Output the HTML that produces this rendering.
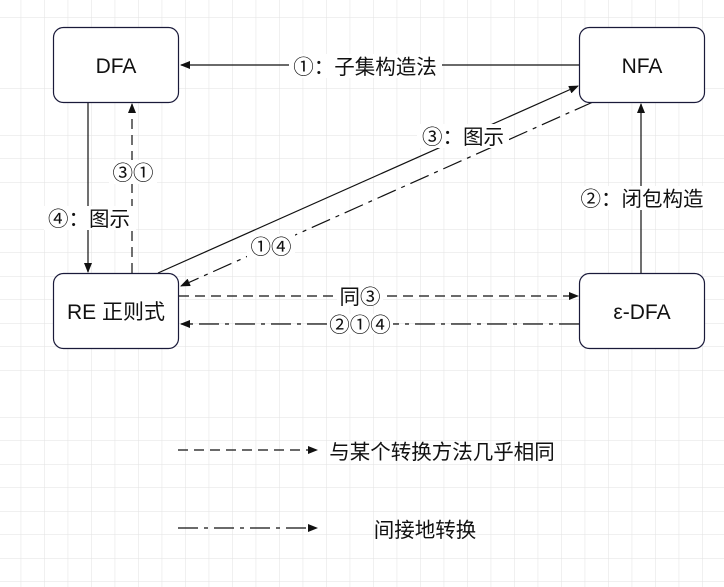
<!DOCTYPE html>
<html><head><meta charset="utf-8"><style>
html,body{margin:0;padding:0;background:#fff}
svg{display:block}
text{font-family:"Liberation Sans","Noto Sans CJK SC",sans-serif;fill:#111}
.c{font-family:"WenQuanYi Zen Hei","Noto Sans CJK SC",sans-serif}
</style></head><body>
<svg width="724" height="587" viewBox="0 0 724 587" xmlns="http://www.w3.org/2000/svg">
<defs>
<pattern id="g" x="20.7" y="17.5" width="23.5" height="23.5" patternUnits="userSpaceOnUse">
<path d="M0 0H23.5M0 0V23.5" stroke="#e2e2e2" stroke-width="1" fill="none"/>
</pattern>
<marker id="a" markerWidth="10" markerHeight="8" refX="9" refY="4" orient="auto" markerUnits="userSpaceOnUse">
<path d="M0 0L10 4L0 8Z" fill="#111"/>
</marker>
</defs>
<rect width="724" height="587" fill="#fff"/>
<rect width="724" height="587" fill="url(#g)"/>
<g stroke="#111" stroke-width="1.2" fill="none">
<line x1="579" y1="65" x2="181" y2="65" marker-end="url(#a)"/>
<line x1="88" y1="102" x2="88" y2="272" marker-end="url(#a)"/>
<line x1="132" y1="273" x2="132" y2="104" stroke-dasharray="10 6" marker-end="url(#a)"/>
<line x1="158" y1="273" x2="578" y2="86" marker-end="url(#a)"/>
<line x1="593" y1="102" x2="181" y2="286" stroke-dasharray="20 6 4 6" marker-end="url(#a)"/>
<line x1="641" y1="273" x2="641" y2="104" marker-end="url(#a)"/>
<line x1="179" y1="296" x2="578" y2="296" stroke-dasharray="10 6" marker-end="url(#a)"/>
<line x1="579" y1="324" x2="181" y2="324" stroke-dasharray="20 6 4 6" marker-end="url(#a)"/>
<line x1="178" y1="450" x2="317" y2="450" stroke-dasharray="10 6" marker-end="url(#a)"/>
<line x1="178" y1="528" x2="317" y2="528" stroke-dasharray="20 6 4 6" marker-end="url(#a)"/>
</g>
<g fill="#fff" stroke="#1a1a3a" stroke-width="1.2">
<rect x="53.5" y="27.5" width="125" height="75" rx="10"/>
<rect x="579.5" y="27.5" width="125" height="75" rx="10"/>
<rect x="53.5" y="273.5" width="125" height="75" rx="10"/>
<rect x="579.5" y="273.5" width="125" height="75" rx="10"/>
</g>
<g fill="#fff">
<rect x="289" y="54" width="153" height="24"/>
<rect x="109" y="160" width="48" height="24"/>
<rect x="44" y="206" width="92" height="24"/>
<rect x="417" y="124" width="92" height="24"/>
<rect x="247" y="234" width="48" height="24"/>
<rect x="577" y="186" width="130" height="24"/>
<rect x="337" y="286" width="46" height="20"/>
<rect x="327" y="314" width="66" height="20"/>
</g>
<g font-size="21" text-anchor="middle">
<text x="116" y="73">DFA</text>
<text x="642" y="73">NFA</text>
<text x="116" y="319">RE 正则式</text>
<text x="642" y="319">ε-DFA</text>
</g>
<g font-size="20.5" text-anchor="middle">
<text class="c" x="365" y="74">①：子集构造法</text>
<text class="c" x="133" y="180">③①</text>
<text class="c" x="89" y="226">④：图示</text>
<text class="c" x="463" y="144">③：图示</text>
<text class="c" x="271" y="254">①④</text>
<text class="c" x="642" y="206">②：闭包构造</text>
<text class="c" x="360" y="304">同③</text>
<text class="c" x="360" y="332">②①④</text>
<text class="c" x="442" y="459">与某个转换方法几乎相同</text>
<text class="c" x="425" y="537">间接地转换</text>
</g>
</svg>
</body></html>
